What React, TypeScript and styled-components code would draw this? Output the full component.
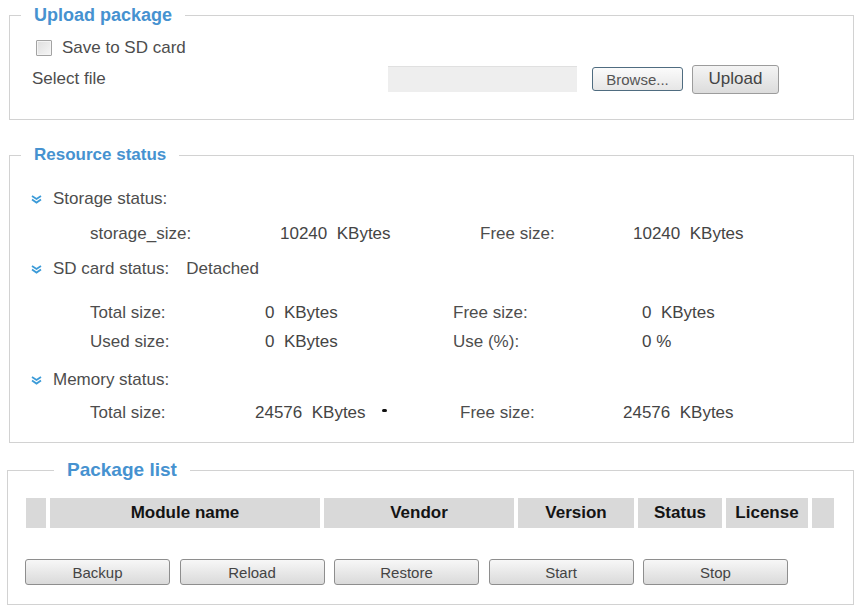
import React from 'react';
import styled, { createGlobalStyle } from 'styled-components';

type Cell = { label: string; value: string };

const GlobalStyle = createGlobalStyle`
  html, body {
    margin: 0;
    padding: 0;
    background: #ffffff;
  }
  body {
    font-family: "Liberation Sans", Arial, sans-serif;
    color: #4d4d4d;
  }
`;

const Page = styled.div`
  width: 857px;
  padding-top: 4px;
  box-sizing: border-box;
`;

const Group = styled.fieldset<{ $left?: number; $top?: number }>`
  margin: ${p => p.$top ?? 0}px 3px 0 ${p => p.$left ?? 9}px;
  padding: 0;
  min-width: 0;
  border: 1px solid #d2d2d2;
`;

const Legend = styled.legend<{ $offset: number; $size: number }>`
  margin-left: ${p => p.$offset}px;
  padding: 0 13px;
  font-size: ${p => p.$size}px;
  line-height: 22px;
  font-weight: bold;
  color: #4692d0;
`;

/* upload package */

const CheckRow = styled.label`
  display: flex;
  align-items: center;
  gap: 10px;
  height: 22px;
  margin-top: 11px;
  padding-left: 26px;
  font-size: 17px;
`;

const CheckBox = styled.input`
  appearance: none;
  width: 16px;
  height: 16px;
  margin: 0;
  border: 1px solid #a3a3a3;
  border-radius: 1px;
  background: linear-gradient(135deg, #dedede, #f6f6f6);
  box-shadow: inset 0 0 0 1px #f4f4f4;
`;

const FileRow = styled.div`
  display: grid;
  grid-template-columns: 341px 189px auto;
  column-gap: 15px;
  align-items: center;
  height: 30px;
  margin-top: 5px;
  padding: 0 0 25px 22px;
  font-size: 17px;
`;

const FileBox = styled.div`
  height: 26px;
  background: #eeeeee;
  border-top: 1px solid #e0e0e0;
  box-sizing: border-box;
`;

const ButtonPair = styled.div`
  display: flex;
  align-items: center;
  gap: 9px;
`;

const BrowseButton = styled.button`
  width: 91px;
  height: 24px;
  padding: 0;
  font-family: inherit;
  font-size: 15px;
  color: #555;
  border: 1px solid #4f6c80;
  border-radius: 3px;
  background: linear-gradient(#fbfbfb, #e6e6e6);
`;

const UploadButton = styled.button`
  width: 87px;
  height: 29px;
  padding: 0;
  font-family: inherit;
  font-size: 17px;
  color: #444;
  border: 1px solid #9c9c9c;
  border-radius: 3px;
  background: linear-gradient(#f4f4f4, #dcdcdc);
`;

/* resource status */

const StatusBody = styled.div`
  padding: 18px 0 14px 21px;
`;

const Heading = styled.div<{ $top?: number }>`
  display: flex;
  align-items: center;
  height: 30px;
  margin-top: ${p => p.$top ?? 0}px;
  font-size: 17px;
`;

const Arrow = styled.svg`
  width: 11px;
  height: 9px;
  margin-right: 11px;
`;

const HeadingValue = styled.span`
  margin-left: 17px;
`;

const InfoGrid = styled.div<{ $cols: string; $top: number; $row: number }>`
  display: grid;
  grid-template-columns: ${p => p.$cols};
  grid-auto-rows: ${p => p.$row}px;
  align-items: center;
  margin-top: ${p => p.$top}px;
  padding-left: 59px;
  font-size: 17px;
  white-space: pre;
`;

const Value = styled.span`
  color: #444;
`;

const Marker = styled.span`
  display: inline-block;
  width: 5px;
  height: 3px;
  margin-left: 16px;
  border-radius: 2px;
  background: #111;
  vertical-align: 6px;
`;

/* package list */

const ListBody = styled.div`
  padding: 17px 0 19px 17px;
`;

const HeaderGrid = styled.div`
  display: grid;
  grid-template-columns: 20px 270px 190px 116px 84px 82px 22px;
  column-gap: 4px;
  height: 30px;
  margin-left: 1px;
`;

const HeadCell = styled.div`
  display: flex;
  align-items: center;
  justify-content: center;
  background: #d9d9d9;
  font-size: 17px;
  font-weight: bold;
  color: #141414;
`;

const ActionRow = styled.div`
  display: flex;
  gap: 9.5px;
  margin-top: 31px;
`;

const ActionButton = styled.button`
  width: 145px;
  height: 26px;
  padding: 0;
  font-family: inherit;
  font-size: 15px;
  color: #444;
  border: 1px solid #8e8e8e;
  border-radius: 3px;
  background: linear-gradient(#f7f7f7, #dadada);
`;

const ChevronDown = () => (
  <Arrow viewBox="0 0 11 9">
    <path d="M1 1 L5.5 4 L10 1 M1 4.6 L5.5 7.6 L10 4.6" fill="none" stroke="#3c9bd8" strokeWidth="1.8" />
  </Arrow>
);

const InfoRow: React.FC<{ cells: Cell[]; marker?: boolean }> = ({ cells, marker }) => (
  <>
    {cells.map((c, i) => (
      <React.Fragment key={c.label}>
        <span>{c.label}</span>
        <Value>
          {c.value}
          {marker && i === 0 && <Marker />}
        </Value>
      </React.Fragment>
    ))}
  </>
);

const App: React.FC = () => {
  const columns = ['', 'Module name', 'Vendor', 'Version', 'Status', 'License', ''];
  const actions = ['Backup', 'Reload', 'Restore', 'Start', 'Stop'];

  return (
    <Page>
      <GlobalStyle />

      <Group>
        <Legend $offset={11} $size={18}>Upload package</Legend>
        <CheckRow>
          <CheckBox type="checkbox" />
          Save to SD card
        </CheckRow>
        <FileRow>
          <span>Select file</span>
          <FileBox />
          <ButtonPair>
            <BrowseButton>Browse...</BrowseButton>
            <UploadButton>Upload</UploadButton>
          </ButtonPair>
        </FileRow>
      </Group>

      <Group $top={24}>
        <Legend $offset={11} $size={17}>Resource status</Legend>
        <StatusBody>
          <Heading>
            <ChevronDown />
            Storage status:
          </Heading>
          <InfoGrid $cols="190px 200px 153px auto" $top={5} $row={30}>
            <InfoRow cells={[
              { label: 'storage_size:', value: '10240  KBytes' },
              { label: 'Free size:', value: '10240  KBytes' },
            ]} />
          </InfoGrid>

          <Heading $top={5}>
            <ChevronDown />
            SD card status:
            <HeadingValue>Detached</HeadingValue>
          </Heading>
          <InfoGrid $cols="175px 188px 189px auto" $top={14} $row={29}>
            <InfoRow cells={[
              { label: 'Total size:', value: '0  KBytes' },
              { label: 'Free size:', value: '0  KBytes' },
            ]} />
            <InfoRow cells={[
              { label: 'Used size:', value: '0  KBytes' },
              { label: 'Use (%):', value: '0 %' },
            ]} />
          </InfoGrid>

          <Heading $top={9}>
            <ChevronDown />
            Memory status:
          </Heading>
          <InfoGrid $cols="165px 205px 163px auto" $top={3} $row={30}>
            <InfoRow marker cells={[
              { label: 'Total size:', value: '24576  KBytes' },
              { label: 'Free size:', value: '24576  KBytes' },
            ]} />
          </InfoGrid>
        </StatusBody>
      </Group>

      <Group $top={16} $left={7}>
        <Legend $offset={46} $size={19}>Package list</Legend>
        <ListBody>
          <HeaderGrid>
            {columns.map((c, i) => (
              <HeadCell key={i}>{c}</HeadCell>
            ))}
          </HeaderGrid>
          <ActionRow>
            {actions.map(a => (
              <ActionButton key={a}>{a}</ActionButton>
            ))}
          </ActionRow>
        </ListBody>
      </Group>
    </Page>
  );
};

export default App;
